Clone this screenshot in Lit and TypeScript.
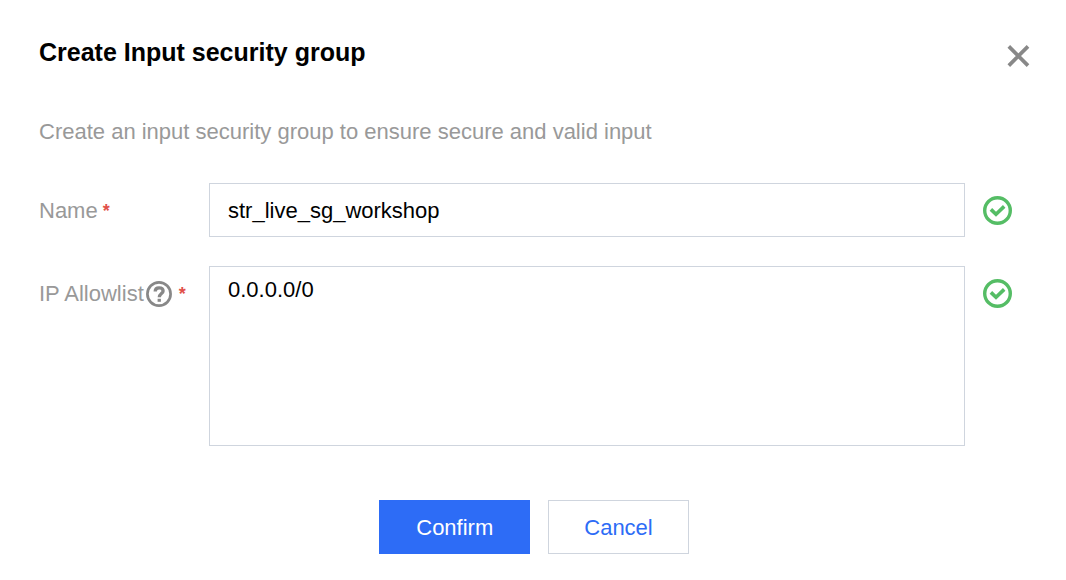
import { LitElement, html, css, svg } from "lit";
import { customElement, state } from "lit/decorators.js";

const checkIcon = html`<svg class="ok" viewBox="0 0 29 29" role="img" aria-label="Valid">
  ${svg`<circle cx="14.5" cy="14.5" r="12.8" fill="none" stroke="currentColor" stroke-width="3.4" />
  <path d="M7.9 13.4 L13 18.3 L21.2 10.4" fill="none" stroke="currentColor" stroke-width="3.6" />`}
</svg>`;

const helpIcon = html`<svg class="help" viewBox="0 0 26 26" role="img" aria-label="Help">
  ${svg`<circle cx="13" cy="13" r="11.6" fill="none" stroke="currentColor" stroke-width="2.7" />
  <path d="M9.2 10.6 C9.2 8 10.7 6.8 13.1 6.8 C15.5 6.8 17.1 8 17.1 9.9 C17.1 12.4 13.3 12.6 13.3 16.2" fill="none" stroke="currentColor" stroke-width="3.3" />
  <rect x="11.6" y="17.8" width="3.3" height="3" fill="currentColor" />`}
</svg>`;

@customElement("app-root")
export class AppRoot extends LitElement {
  static styles = css`
    :host {
      display: block;
      box-sizing: border-box;
      min-height: 100vh;
      padding: 36px 36px 26px 39px;
      background: #fff;
      color: #000;
      font: 22px/32px "Liberation Sans", Arial, Helvetica, sans-serif;
    }
    * {
      box-sizing: border-box;
    }
    svg {
      display: block;
      flex: none;
    }
    .header {
      display: flex;
      justify-content: space-between;
      align-items: center;
    }
    h1 {
      margin: 0;
      font-size: 25px;
      line-height: 32px;
      font-weight: 700;
    }
    .close {
      display: flex;
      padding: 7px 0 0;
      border: 0;
      background: none;
      color: #888;
      cursor: pointer;
    }
    .close svg {
      width: 24px;
      height: 24px;
    }
    .desc {
      margin: 48px 0 35px;
      color: #999;
    }
    .fields {
      display: grid;
      gap: 29px;
      padding-right: 18px;
    }
    .row {
      display: grid;
      grid-template-columns: 170px 1fr 47px;
      align-items: start;
    }
    .label {
      display: flex;
      align-items: center;
      height: 54px;
      padding-top: 2px;
      color: #999;
    }
    .required {
      margin-left: 5px;
      color: #e1504a;
      font-size: 18px;
      font-weight: 700;
    }
    .help {
      width: 26px;
      height: 26px;
      margin: 0 2px;
      color: #888;
    }
    .status {
      display: flex;
      align-items: center;
      justify-content: flex-end;
      height: 54px;
    }
    .ok {
      width: 29px;
      height: 29px;
      color: #55bd65;
    }
    .control {
      display: block;
      width: 100%;
      height: 54px;
      margin: 0;
      padding: 2px 18px 0;
      border: 1px solid #cfd5de;
      border-radius: 0;
      outline: 0;
      background: #fff;
      color: #000;
      font: inherit;
    }
    textarea.control {
      height: 180px;
      padding: 7px 18px;
      resize: none;
    }
    .actions {
      display: flex;
      justify-content: center;
      gap: 18px;
      margin-top: 54px;
      padding-right: 1px;
    }
    .btn {
      height: 54px;
      padding: 2px 35px 0;
      border: 1px solid #cfd5de;
      background: #fff;
      color: #2d6cf6;
      font: inherit;
      cursor: pointer;
    }
    .primary {
      padding: 2px 36px 0;
      border-color: #2d6cf6;
      background: #2d6cf6;
      color: #fff;
    }
  `;

  @state() private name = "str_live_sg_workshop";
  @state() private allowlist = "0.0.0.0/0";

  render() {
    return html`
      <div class="header">
        <h1>Create Input security group</h1>
        <button class="close" type="button" aria-label="Close">
          <svg viewBox="0 0 24 24" aria-hidden="true">
            <path d="M2.8 2.4 L22 21.6 M22 2.4 L2.8 21.6" fill="none" stroke="currentColor" stroke-width="3.7" />
          </svg>
        </button>
      </div>
      <p class="desc">Create an input security group to ensure secure and valid input</p>
      <form @submit=${(e: Event) => e.preventDefault()}>
        <div class="fields">
          <div class="row">
            <label class="label" for="name">Name<span class="required">*</span></label>
            <input
              class="control"
              id="name"
              type="text"
              required
              .value=${this.name}
              @input=${(e: Event) => (this.name = (e.target as HTMLInputElement).value)}
            />
            <span class="status">${this.name ? checkIcon : null}</span>
          </div>
          <div class="row">
            <label class="label" for="allowlist">IP Allowlist${helpIcon}<span class="required">*</span></label>
            <textarea
              class="control"
              id="allowlist"
              required
              .value=${this.allowlist}
              @input=${(e: Event) => (this.allowlist = (e.target as HTMLTextAreaElement).value)}
            ></textarea>
            <span class="status">${this.allowlist ? checkIcon : null}</span>
          </div>
        </div>
        <div class="actions">
          <button class="btn primary" type="submit">Confirm</button>
          <button class="btn" type="button">Cancel</button>
        </div>
      </form>
    `;
  }
}
